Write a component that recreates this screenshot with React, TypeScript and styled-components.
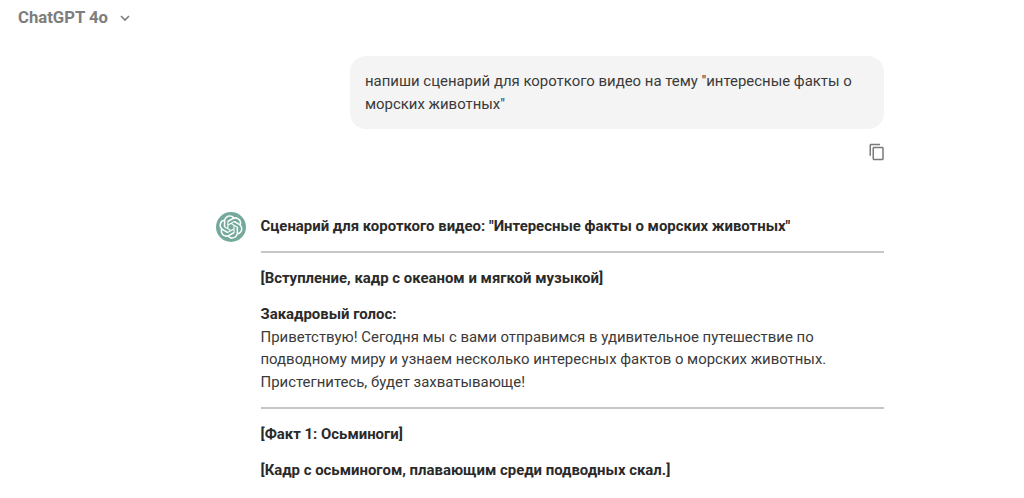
import React from "react";
import styled, { createGlobalStyle } from "styled-components";

const Global = createGlobalStyle`
  html, body { margin: 0; padding: 0; background: #fff; height: 498px; overflow: hidden; }
  body { font-family: Roboto, "Liberation Sans", sans-serif; color: #2f2f2f; }
`;

const Page = styled.div`
  height: 498px;
  overflow: hidden;
`;

const TopBar = styled.header`
  display: flex;
  align-items: center;
  gap: 11px;
  box-sizing: border-box;
  padding: 0 0 0 18px;
  height: 36px;
  color: #7d7d7d;
  font-size: 16.7px;
  font-weight: 700;
  line-height: 20px;
`;

const Thread = styled.main`
  width: 668px;
  margin: 20px 0 0 216px;
  display: flex;
  flex-direction: column;
`;

const UserRow = styled.section`
  display: flex;
  flex-direction: column;
  align-items: flex-end;
`;

const Bubble = styled.div`
  width: 534px;
  height: 73px;
  box-sizing: border-box;
  padding: 13.5px 15px;
  background: #f4f4f4;
  border-radius: 16px;
  font-size: 14.93px;
  line-height: 23px;
  color: #3a3a3a;
`;

const CopyButton = styled.button`
  border: 0;
  background: none;
  padding: 0;
  margin: 14px -2px 0 0;
  width: 18px;
  height: 18px;
  color: #7a7a7a;
  display: block;
`;

const Reply = styled.article`
  margin-top: 49px;
  display: grid;
  grid-template-columns: 30px 1fr;
  column-gap: 14.5px;
`;

const Avatar = styled.div`
  width: 30px;
  height: 30px;
  border-radius: 50%;
  background: #74aa9c;
  display: flex;
  align-items: center;
  justify-content: center;
  color: #fff;
  margin-top: 2px;
`;

const Body = styled.div`
  font-size: 14.93px;
  line-height: 22.5px;
  color: #3a3a3a;
  padding-top: 5px;
`;

const Para = styled.p`
  margin: 0 0 13.75px;
`;

const Strong = styled.strong`
  font-weight: 700;
  color: #2a2a2a;
`;

const Rule = styled.hr`
  border: 0;
  height: 2px;
  background: #c6c6c6;
  margin: 0 0 13.75px;
`;

const CopyIcon = () => (
  <svg width="18" height="18" viewBox="0 0 24 24" fill="currentColor">
    <path d="M16 1H4c-1.1 0-2 .9-2 2v14h2V3h12V1zm3 4H8c-1.1 0-2 .9-2 2v14c0 1.1.9 2 2 2h11c1.1 0 2-.9 2-2V7c0-1.1-.9-2-2-2zm0 16H8V7h11v14z" />
  </svg>
);

const Chevron = () => (
  <svg width="12" height="12" viewBox="0 0 12 12" fill="none" stroke="currentColor" strokeWidth="1.6">
    <path d="M2 4l4 4 4-4" />
  </svg>
);

const Logo = () => (
  <svg width="24" height="24" viewBox="0 0 41 41" fill="currentColor">
    <path d="M37.5324 16.8707C37.9808 15.5241 38.1363 14.0974 37.9886 12.6859C37.8409 11.2744 37.3934 9.91076 36.676 8.68622C35.6126 6.83404 33.9882 5.3676 32.0373 4.4985C30.0864 3.62941 27.9098 3.40259 25.8215 3.85078C24.8796 2.7893 23.7219 1.94125 22.4257 1.36341C21.1295 0.785575 19.7249 0.491269 18.3058 0.500197C16.1708 0.495044 14.0893 1.16803 12.3614 2.42214C10.6335 3.67624 9.34853 5.44666 8.6917 7.47815C7.30085 7.76286 5.98686 8.3414 4.8377 9.17505C3.68854 10.0087 2.73073 11.0782 2.02839 12.312C0.956464 14.1591 0.498905 16.2988 0.721698 18.4228C0.944492 20.5467 1.83612 22.5449 3.268 24.1293C2.81966 25.4759 2.66413 26.9026 2.81182 28.3141C2.95951 29.7256 3.40701 31.0892 4.12437 32.3138C5.18791 34.1659 6.8123 35.6322 8.76321 36.5013C10.7141 37.3704 12.8907 37.5973 14.9789 37.1492C15.9208 38.2107 17.0786 39.0587 18.3747 39.6366C19.6709 40.2144 21.0755 40.5087 22.4946 40.4998C24.6307 40.5054 26.7133 39.8321 28.4418 38.5772C30.1704 37.3223 31.4556 35.5506 32.1119 33.5179C33.5027 33.2332 34.8167 32.6547 35.9659 31.821C37.115 30.9874 38.0728 29.9178 38.7752 28.684C39.8458 26.8371 40.3023 24.6979 40.0789 22.5748C39.8556 20.4517 38.9639 18.4544 37.5324 16.8707ZM22.4978 37.8849C20.7443 37.8874 19.0459 37.2733 17.6994 36.1501C17.7601 36.117 17.8666 36.0586 17.936 36.0161L25.9004 31.4156C26.1003 31.3019 26.2663 31.137 26.3813 30.9378C26.4964 30.7386 26.5563 30.5124 26.5549 30.2825V19.0542L29.9213 20.998C29.9389 21.0068 29.9541 21.0198 29.9656 21.0359C29.977 21.052 29.9842 21.0707 29.9867 21.0902V30.3889C29.9842 32.375 29.1946 34.2791 27.7909 35.6841C26.3872 37.0892 24.4838 37.8806 22.4978 37.8849ZM6.39227 31.0064C5.51397 29.4888 5.19742 27.7107 5.49804 25.9832C5.55718 26.0187 5.66048 26.0818 5.73461 26.1244L13.699 30.7248C13.8975 30.8408 14.1233 30.902 14.3532 30.902C14.583 30.902 14.8088 30.8408 15.0073 30.7248L24.731 25.1103V28.9979C24.7321 29.0177 24.7283 29.0376 24.7199 29.0556C24.7115 29.0736 24.6988 29.0893 24.6829 29.1012L16.6317 33.7497C14.9096 34.7416 12.8643 35.0097 10.9447 34.4954C9.02506 33.9811 7.38785 32.7263 6.39227 31.0064ZM4.29707 13.6194C5.17156 12.0998 6.55279 10.9364 8.19885 10.3327C8.19885 10.4013 8.19491 10.5228 8.19491 10.6071V19.808C8.19351 20.0378 8.25334 20.2638 8.36823 20.4629C8.48312 20.6619 8.64893 20.8267 8.84863 20.9404L18.5723 26.5542L15.206 28.4979C15.1894 28.5089 15.1703 28.5155 15.1505 28.5173C15.1307 28.5191 15.1107 28.516 15.0924 28.5082L7.04046 23.8557C5.32135 22.8601 4.06716 21.2235 3.55289 19.3046C3.03862 17.3858 3.30624 15.3413 4.29707 13.6194ZM31.955 20.0556L22.2312 14.4411L25.5976 12.4981C25.6142 12.4872 25.6333 12.4805 25.6531 12.4787C25.6729 12.4769 25.6928 12.4801 25.7111 12.4879L33.7631 17.1364C34.9967 17.849 36.0017 18.8982 36.6606 20.1613C37.3194 21.4244 37.6047 22.849 37.4832 24.2684C37.3617 25.6878 36.8382 27.0432 35.9743 28.1759C35.1103 29.3086 33.9415 30.1717 32.6047 30.6641C32.6047 30.5947 32.6047 30.4733 32.6047 30.3889V21.188C32.6066 20.9586 32.5474 20.7328 32.4332 20.5338C32.319 20.3348 32.154 20.1698 31.955 20.0556ZM35.3055 15.0128C35.2464 14.9765 35.1431 14.9142 35.069 14.8717L27.1045 10.2712C26.906 10.1554 26.6803 10.0943 26.4504 10.0943C26.2206 10.0943 25.9948 10.1554 25.7963 10.2712L16.0726 15.8858V11.9982C16.0715 11.9783 16.0753 11.9585 16.0837 11.9405C16.0921 11.9225 16.1048 11.9068 16.1207 11.8949L24.1719 7.25025C25.4053 6.53903 26.8158 6.19376 28.2383 6.25482C29.6608 6.31589 31.0364 6.78077 32.2044 7.59508C33.3723 8.40939 34.2842 9.53945 34.8334 10.8531C35.3826 12.1667 35.5464 13.6095 35.3055 15.0128ZM14.2424 21.9419L10.8752 19.9981C10.8576 19.9893 10.8423 19.9763 10.8309 19.9602C10.8195 19.9441 10.8122 19.9254 10.8098 19.9058V10.6071C10.8107 9.18295 11.2173 7.78848 11.9819 6.58696C12.7466 5.38544 13.8377 4.42659 15.1275 3.82264C16.4173 3.21869 17.8524 2.99464 19.2649 3.1767C20.6775 3.35876 22.0089 3.93941 23.1034 4.85067C23.0427 4.88379 22.937 4.94215 22.8668 4.98473L14.9024 9.58517C14.7025 9.69878 14.5366 9.86356 14.4215 10.0626C14.3065 10.2616 14.2466 10.4877 14.2479 10.7175L14.2424 21.9419ZM16.071 17.9991L20.4018 15.4978L24.7325 17.9975V22.9985L20.4018 25.4983L16.071 22.9985V17.9991Z" />
  </svg>
);

export default function App() {
  return (
    <Page>
      <Global />
      <TopBar>
        ChatGPT 4o
        <Chevron />
      </TopBar>
      <Thread>
        <UserRow>
          <Bubble>напиши сценарий для короткого видео на тему "интересные факты о морских животных"</Bubble>
          <CopyButton aria-label="Копировать">
            <CopyIcon />
          </CopyButton>
        </UserRow>
        <Reply>
          <Avatar>
            <Logo />
          </Avatar>
          <Body>
            <Para>
              <Strong>Сценарий для короткого видео: "Интересные факты о морских животных"</Strong>
            </Para>
            <Rule />
            <Para>
              <Strong>[Вступление, кадр с океаном и мягкой музыкой]</Strong>
            </Para>
            <Para>
              <Strong>Закадровый голос:</Strong>
              <br />
              Приветствую! Сегодня мы с вами отправимся в удивительное путешествие по подводному миру и узнаем несколько интересных фактов о морских животных. Пристегнитесь, будет захватывающе!
            </Para>
            <Rule />
            <Para>
              <Strong>[Факт 1: Осьминоги]</Strong>
            </Para>
            <Para>
              <Strong>[Кадр с осьминогом, плавающим среди подводных скал.]</Strong>
            </Para>
          </Body>
        </Reply>
      </Thread>
    </Page>
  );
}
